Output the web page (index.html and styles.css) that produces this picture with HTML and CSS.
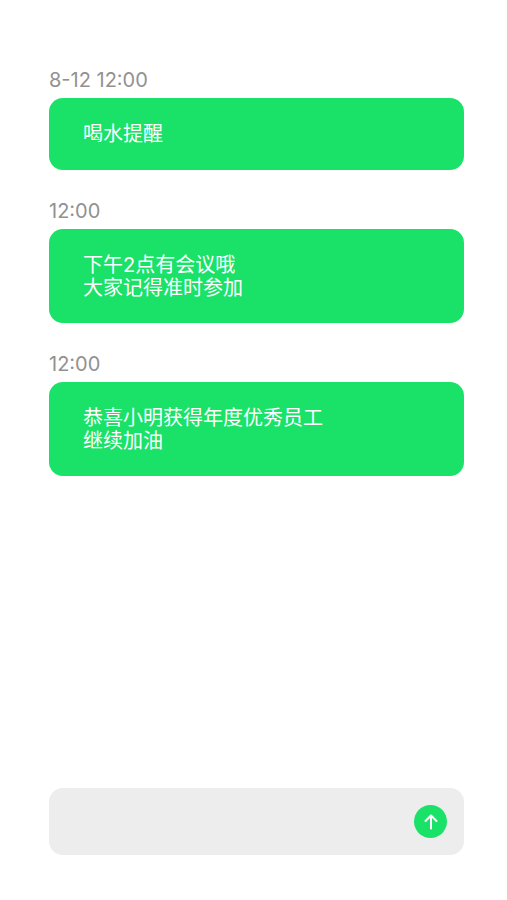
FILE: index.html
```html
<!DOCTYPE html>
<html lang="zh-CN">
<head>
<meta charset="utf-8">
<meta name="viewport" content="width=device-width, initial-scale=1">
<title>消息</title>
<link rel="stylesheet" href="styles.css">
</head>
<body>
<main class="chat">
  <ol class="messages">
    <li class="message">
      <time class="time">8-12 12:00</time>
      <p class="bubble">喝水提醒</p>
    </li>
    <li class="message">
      <time class="time">12:00</time>
      <p class="bubble">下午2点有会议哦<br>大家记得准时参加</p>
    </li>
    <li class="message">
      <time class="time">12:00</time>
      <p class="bubble">恭喜小明获得年度优秀员工<br>继续加油</p>
    </li>
  </ol>
  <form class="composer">
    <input class="field" type="text" aria-label="输入消息">
    <button class="send" type="button" aria-label="发送">
      <svg class="arrow" viewBox="0 0 16 16" aria-hidden="true"><path d="M8 14.500V1.500M2.500 7l5.500-5.500L13.500 7"/></svg>
    </button>
  </form>
</main>
</body>
</html>
```
FILE: styles.css
```css
* {
  box-sizing: border-box;
}

body {
  margin: 0;
  background: #fff;
  font-family: Inter, "Noto Sans CJK SC", sans-serif;
}

.chat {
  display: flex;
  flex-direction: column;
  justify-content: space-between;
  min-height: 100vh;
  padding: 68px 43px 45px 49px;
}

.messages {
  display: flex;
  flex-direction: column;
  gap: 29px;
  margin: 0;
  padding: 0;
  list-style: none;
}

.time {
  display: block;
  margin-bottom: 6px;
  color: #919191;
  font-size: 20px;
  line-height: 24px;
}

.bubble {
  min-height: 72px;
  margin: 0;
  padding: 25px 34px 23px;
  border-radius: 14px;
  background: #1ae268;
  color: #fff;
  font-size: 20px;
  line-height: 23px;
}

.composer {
  display: flex;
  align-items: center;
  padding: 17px;
  border-radius: 14px;
  background: #ededed;
}

.field {
  flex: 1;
  min-width: 0;
  height: 32px;
  padding: 0;
  border: 0;
  outline: 0;
  background: transparent;
  font: inherit;
  font-size: 20px;
}

.send {
  display: grid;
  place-items: center;
  width: 33px;
  height: 33px;
  padding: 0;
  border: 0;
  border-radius: 50%;
  background: #1ae268;
}

.arrow {
  width: 16px;
  height: 16px;
  fill: none;
  stroke: #fff;
  stroke-width: 2;
  stroke-linecap: round;
  stroke-linejoin: round;
}
```
